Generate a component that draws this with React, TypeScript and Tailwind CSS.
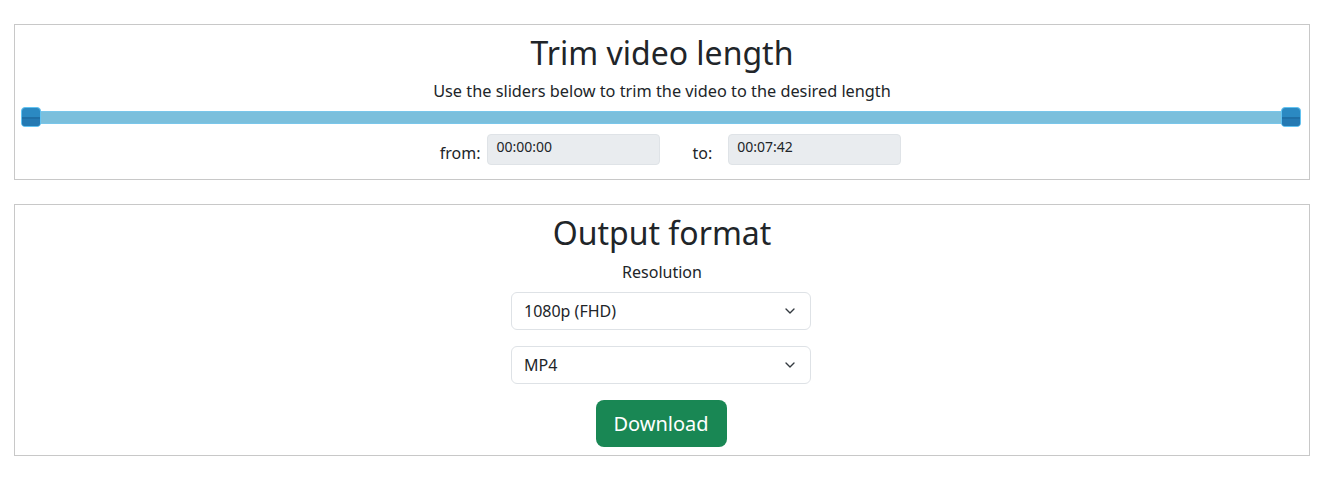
import { ChevronDown } from "lucide-react";

const Handle = ({ side }: { side: "left" | "right" }) => (
  <div
    className={
      "absolute top-1/2 -translate-y-1/2 h-[20px] w-[20px] overflow-hidden rounded-[4px] border border-[#62c3f2] bg-[#2b89c2] " +
      (side === "left" ? "left-0" : "right-0")
    }
  >
    <div className="mt-[9px] h-[2px] bg-[#1f6fa6]" />
    <div className="h-full bg-[#2479b3]" />
  </div>
);

const Select = ({ value }: { value: string }) => (
  <div className="flex h-[38px] w-[300px] items-center justify-between rounded-[6px] border border-[#dee2e6] bg-white pl-[12px] pr-[12px] text-[16px] text-[#212529]">
    <span>{value}</span>
    <ChevronDown size={16} strokeWidth={2} className="text-[#343a40]" />
  </div>
);

export default function App() {
  return (
    <div
      className="min-h-screen bg-white px-[14px] pt-[24px] text-[#212529]"
      style={{ fontFamily: '"Noto Sans", "Open Sans", sans-serif' }}
    >
      {/* trim */}
      <div className="flex w-[1296px] flex-col items-center border border-[#c8c8c8] pb-[14px]">
        <h2 className="mt-[6px] text-[32px] leading-[44px] font-normal">Trim video length</h2>
        <p className="mt-[4px] text-[16.3px] leading-[24px]">
          Use the sliders below to trim the video to the desired length
        </p>
        <div className="relative mt-[4px] ml-[-2px] h-[20px] w-[1280px]">
          <div className="absolute left-[10px] right-[10px] top-[4px] h-[13px] border-y border-[#79c6ea] bg-[#7bbfdc]" />
          <Handle side="left" />
          <Handle side="right" />
        </div>
        <div className="mt-[6px] ml-[17px] flex items-center">
          <span className="mr-[7px] mt-[8px] text-[16px]">from:</span>
          <div className="h-[31px] w-[173px] rounded-[4px] border border-[#dfe3e7] bg-[#e9ecef] pl-[8px] pt-[3px] text-[14px] leading-[18px]">
            00:00:00
          </div>
          <span className="ml-[32px] mr-[16px] mt-[8px] text-[16px]">to:</span>
          <div className="h-[31px] w-[173px] rounded-[4px] border border-[#dfe3e7] bg-[#e9ecef] pl-[8px] pt-[3px] text-[14px] leading-[18px]">
            00:07:42
          </div>
        </div>
      </div>

      {/* output */}
      <div className="mt-[24px] flex w-[1296px] flex-col items-center border border-[#c8c8c8] pb-[8px]">
        <h2 className="mt-[6px] text-[32px] leading-[44px] font-normal">Output format</h2>
        <p className="mt-[5px] text-[16px] leading-[24px]">Resolution</p>
        <div className="mt-[8px] mr-[2px]">
          <Select value="1080p (FHD)" />
        </div>
        <div className="mt-[16px] mr-[2px]">
          <Select value="MP4" />
        </div>
        <button className="mt-[16px] mr-[2px] h-[47px] w-[131px] rounded-[8px] bg-[#198754] text-[20px] text-white">
          Download
        </button>
      </div>
    </div>
  );
}
